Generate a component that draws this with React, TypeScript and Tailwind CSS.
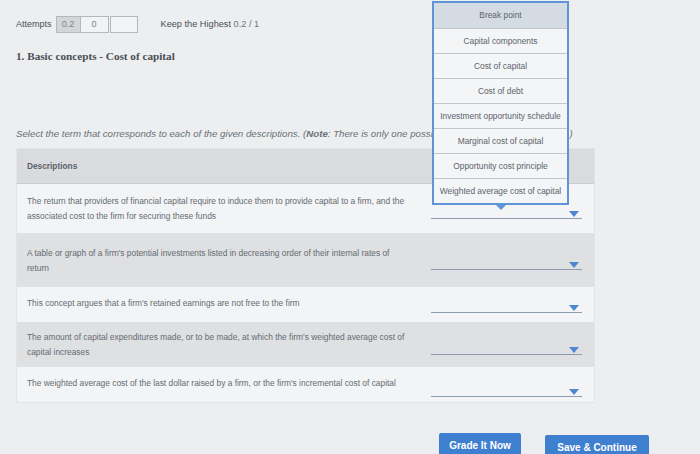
import React from "react";

const rows = [
  {
    text: "The return that providers of financial capital require to induce them to provide capital to a firm, and the associated cost to the firm for securing these funds",
    bg: "bg-[#f3f4f5]",
    h: "h-[49px]",
    pt: "pt-[10px]",
    lineMb: "mb-[14px]",
  },
  {
    text: "A table or graph of a firm's potential investments listed in decreasing order of their internal rates of return",
    bg: "bg-[#dee0e2]",
    h: "h-[54px]",
    pt: "pt-[13px]",
    lineMb: "mb-[17px]",
  },
  {
    text: "This concept argues that a firm's retained earnings are not free to the firm",
    bg: "bg-[#f3f4f5]",
    h: "h-[35px]",
    pt: "pt-[9px]",
    lineMb: "mb-[9px]",
  },
  {
    text: "The amount of capital expenditures made, or to be made, at which the firm's weighted average cost of capital increases",
    bg: "bg-[#dee0e2]",
    h: "h-[45px]",
    pt: "pt-[8px]",
    lineMb: "mb-[12px]",
  },
  {
    text: "The weighted average cost of the last dollar raised by a firm, or the firm's incremental cost of capital",
    bg: "bg-[#f3f4f5]",
    h: "h-[35px]",
    pt: "pt-[9px]",
    lineMb: "mb-[5px]",
  },
];

const options = [
  "Break point",
  "Capital components",
  "Cost of capital",
  "Cost of debt",
  "Investment opportunity schedule",
  "Marginal cost of capital",
  "Opportunity cost principle",
  "Weighted average cost of capital",
];

function Caret() {
  return (
    <svg width="10" height="6" viewBox="0 0 10 6" className="shrink-0">
      <path d="M0 0 L10 0 L5 6 Z" fill="#4f86d2" />
    </svg>
  );
}

export default function App() {
  return (
    <div
      className="relative w-[700px] h-[454px] overflow-hidden bg-[#eceeef] text-[#555a60]"
      style={{ fontFamily: '"Liberation Sans", Arial, sans-serif' }}
    >
      <div className="pl-[16px] pt-[16px]">
        {/* Attempts row */}
        <div className="flex items-center h-[17px] text-[9px] text-[#4a4f55]">
          <span className="mr-[4px]">Attempts</span>
          <div className="flex h-[17px]">
            <div className="w-[25px] flex items-center justify-center bg-[#d3d6d9] border border-[#b4b8bc] text-[#7d838a]">
              0.2
            </div>
            <div className="w-[28px] flex items-center justify-center bg-[#f2f3f4] border-y border-r border-[#b4b8bc] text-[#7d838a]">
              0
            </div>
            <div className="ml-[1px] w-[28px] bg-[#f2f3f4] border border-[#b4b8bc]" />
          </div>
          <span className="ml-[23px] text-[9.2px]">
            Keep the Highest <span className="text-[#6f757c]">0.2 / 1</span>
          </span>
        </div>

        {/* Title */}
        <div
          className="mt-[15px] text-[11.2px] font-bold text-[#4a4f55]"
          style={{ fontFamily: '"Liberation Serif", "Times New Roman", serif' }}
        >
          1. Basic concepts - Cost of capital
        </div>

        {/* Instruction */}
        <div className="mt-[62px] text-[9.7px] italic text-[#6a7077] whitespace-nowrap">
          Select the term that corresponds to each of the given descriptions. (
          <span className="font-bold">Note</span>: There is only one possible answer for each description.)
        </div>

        {/* Table */}
        <div className="mt-[7px] w-[579px] flex flex-col border border-[#e2e4e6]">
          <div className="h-[35px] bg-[#d9dbde] flex items-center pl-[10px] text-[8.3px] font-bold text-[#5b6168] border-b border-[#c9ccd0]">
            Descriptions
          </div>
          {rows.map((r, i) => (
            <div key={i} className={`flex ${r.h} ${r.bg}`}>
              <div className={`w-[412px] shrink-0 pl-[10px] ${r.pt} text-[8.4px] leading-[15px] text-[#656b72] pr-[22px]`}>
                {r.text}
              </div>
              <div className="flex-1 flex flex-col justify-end">
                <div className={`ml-[2px] mr-[12px] ${r.lineMb} flex items-end justify-end border-b border-[#8d9cb0] pb-[1px] pr-[3px]`}>
                  <Caret />
                </div>
              </div>
            </div>
          ))}
        </div>
      </div>

      {/* Dropdown popup */}
      <div className="absolute left-[432px] top-[1px] w-[137px]">
        <div className="border-2 border-[#5f95d8] bg-[#f3f5f7] flex flex-col">
          {options.map((o, i) => (
            <div
              key={o}
              className={`h-[25px] flex items-center justify-center text-[8.4px] whitespace-nowrap text-[#5c636b] ${
                i === 0 ? "bg-[#d4dbe3]" : "border-t border-[#c2c7cd]"
              }`}
            >
              {o}
            </div>
          ))}
        </div>
        <div className="flex justify-center">
          <svg width="12" height="6" viewBox="0 0 12 6" className="-mt-[1px]">
            <path d="M0 0 L12 0 L6 6 Z" fill="#5f95d8" />
          </svg>
        </div>
      </div>

      {/* Buttons */}
      <div className="absolute left-[439px] top-[433px] flex gap-[24px]">
        <div className="w-[82px] h-[24px] rounded-t-[2px] bg-[#3f7fcf] text-white text-[10px] font-bold flex items-center justify-center">
          Grade It Now
        </div>
        <div className="mt-[2px] w-[104px] h-[24px] rounded-t-[2px] bg-[#3f7fcf] text-white text-[10px] font-bold flex items-center justify-center">
          Save &amp; Continue
        </div>
      </div>
    </div>
  );
}
